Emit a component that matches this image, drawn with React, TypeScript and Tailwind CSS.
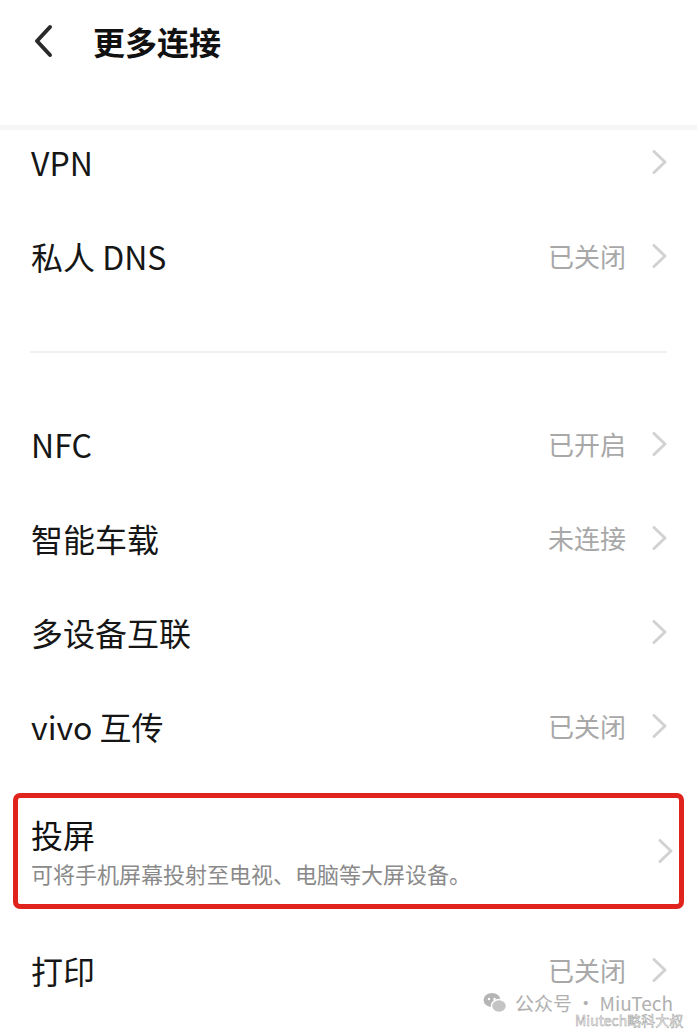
import React from "react";

const font = { fontFamily: '"Noto Sans CJK SC", "Noto Sans", sans-serif' };

function Chevron() {
  return (
    <svg width="16" height="24" viewBox="0 0 16 24" className="shrink-0">
      <polyline points="2,1.5 13,12 2,22.5" fill="none" stroke="#d2d2d2" strokeWidth="3" strokeLinecap="round" strokeLinejoin="round" />
    </svg>
  );
}

function Row({ label, value, className = "h-[94px] pb-[8px]" }: { label: string; value?: string; className?: string }) {
  return (
    <div className={`flex items-center pl-[31px] pr-[29px] ${className}`}>
      <span className="flex-1 text-[32px] leading-[40px] text-[#161616]">{label}</span>
      {value && <span className="mr-[26px] text-[26px] leading-[34px] text-[#a8a8a8]">{value}</span>}
      <Chevron />
    </div>
  );
}

export default function App() {
  return (
    <div className="relative w-[697px] h-[1033px] overflow-hidden bg-white" style={font}>
      <header className="h-[125px] flex items-start pt-[20px] pl-[33px]">
        <svg width="22" height="34" viewBox="0 0 22 34" className="mt-[4px]">
          <polyline points="17,3 4,17 17,31" fill="none" stroke="#2a2a2a" strokeWidth="4" strokeLinecap="round" strokeLinejoin="round" />
        </svg>
        <h1 className="ml-[38px] text-[32px] leading-[42px] font-bold text-[#111]">更多连接</h1>
      </header>
      <div className="h-[5px] bg-[#f6f6f6]" />

      <Row label="VPN" className="h-[82px] pb-[18px]" />
      <Row label="私人 DNS" value="已关闭" className="h-[95px] pb-[8px]" />
      <div className="h-[44px]" />
      <div className="mx-[30px] h-[2px] bg-[#f1f1f1]" />
      <div className="h-[48px]" />

      <Row label="NFC" value="已开启" />
      <Row label="智能车载" value="未连接" />
      <Row label="多设备互联" />
      <Row label="vivo 互传" value="已关闭" />

      <div className="mt-[16px] mx-[13px] h-[116px] rounded-[7px] border-[5px] border-[#e0241d] flex items-center pl-[13px] pr-[5px]">
        <div className="flex-1 flex flex-col">
          <span className="text-[32px] leading-[40px] text-[#111]">投屏</span>
          <span className="mt-[4px] text-[22px] leading-[30px] text-[#8a8a8a]">可将手机屏幕投射至电视、电脑等大屏设备。</span>
        </div>
        <Chevron />
      </div>

      <Row label="打印" value="已关闭" className="mt-[18px] h-[94px] pb-[8px]" />

      <div className="absolute left-[483px] top-[991px] flex items-center gap-[8px] text-[#b0b0b0]">
        <svg width="24" height="22" viewBox="0 0 24 22">
          <ellipse cx="9" cy="8" rx="8.5" ry="7" fill="#b5b5b5" />
          <ellipse cx="16" cy="14" rx="7.5" ry="6.5" fill="#c4c4c4" stroke="#fff" strokeWidth="1.5" />
          <circle cx="6" cy="7" r="1.2" fill="#fff" />
          <circle cx="11.5" cy="7" r="1.2" fill="#fff" />
        </svg>
        <span className="text-[19px] leading-[24px]">公众号 · MiuTech</span>
      </div>
      <div
        className="absolute left-[575px] top-[1011px] text-[14px] leading-[18px] text-white whitespace-nowrap"
        style={{ WebkitTextStroke: "0.5px #9a9a9a" }}
      >
        Miutech略科大叔
      </div>
    </div>
  );
}
